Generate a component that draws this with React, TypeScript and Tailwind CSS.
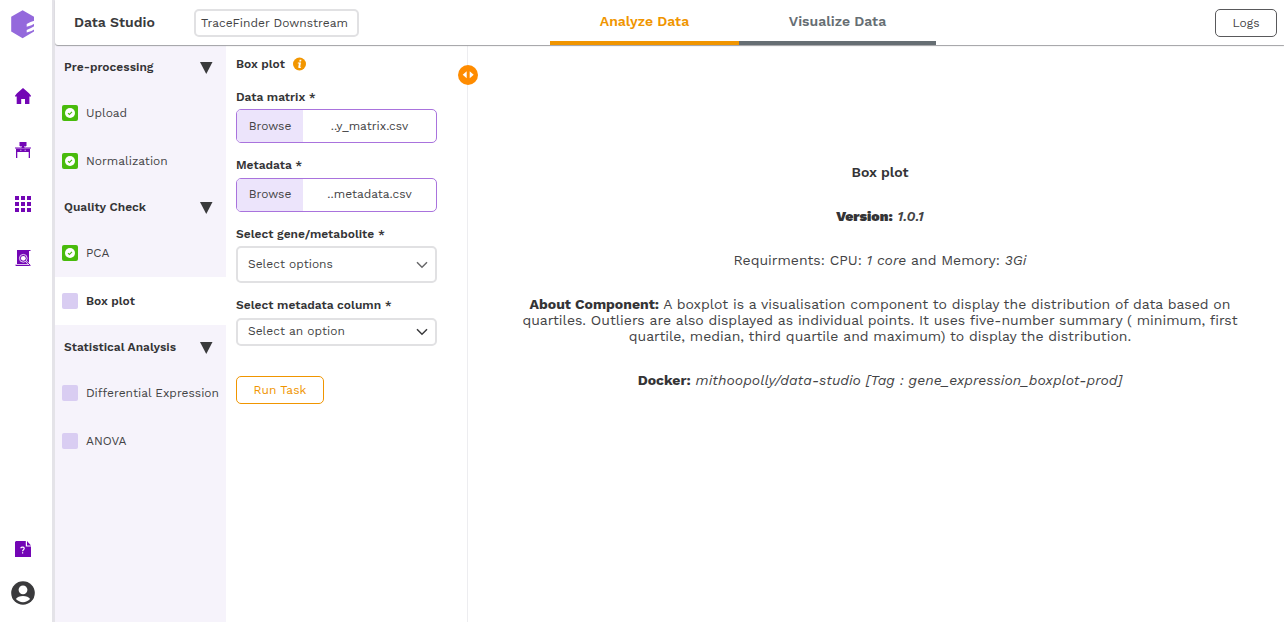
import React, { useState } from "react";

type Step = { name: string; done?: boolean; active?: boolean };
type Group = { title: string; steps: Step[] };

const groups: Group[] = [
  {
    title: "Pre-processing",
    steps: [
      { name: "Upload", done: true },
      { name: "Normalization", done: true },
    ],
  },
  {
    title: "Quality Check",
    steps: [
      { name: "PCA", done: true },
      { name: "Box plot", active: true },
    ],
  },
  {
    title: "Statistical Analysis",
    steps: [{ name: "Differential Expression" }, { name: "ANOVA" }],
  },
];

function Logo() {
  return (
    <svg width="24" height="29" viewBox="0 0 24 29" className="shrink-0">
      <path d="M11.600 .3 23 6.800V21.600L11.600 28.300 .2 21.600V6.800Z" fill="#9469dc" />
      <path d="M15.700 14 19.500 12 24 10.400V13.200L20.500 15.200 15.700 16.700ZM15.700 20 20 17.900 24 15.700V19L20.500 21 15.700 22.600Z" fill="#fff" />
    </svg>
  );
}

function HomeIcon() {
  return (
    <svg width="16" height="16" viewBox="0 0 16 16" fill="#7306b5">
      <path d="M8 0 10.9 2.5 14 5.3 16 7.8V8.6H14.4V16H10V11H6.2V16H1.7V8.6H0V7.8L2 5.3Z" />
    </svg>
  );
}

function DeskIcon() {
  return (
    <svg width="16" height="16" viewBox="0 0 16 16" fill="#7306b5">
      <path d="M4.500 0h7v4h-7zM6.500 4h3v1.500h-3zM0 5.400h16v1.200H0zM1 6.600h14V10H1zM1 10h1.300v6H1zM13.700 10H15v6h-1.300z" />
      <path d="M5 4h1.500v1.200H5zM9.500 4H11v1.200H9.500zM1 6.500h14v.6H1zM5 7.800h1.500v.9H5zM9.500 7.800H11v.9H9.500z" fill="#c79ce4" />
    </svg>
  );
}

function GridIcon() {
  return (
    <svg width="16" height="16" viewBox="0 0 16 16" fill="#7306b5">
      <path d="M0 0h4v4H0zM6 0h4v4H6zM12 0h4v4h-4zM0 6h4v4H0zM6 6h4v4H6zM12 6h4v4h-4zM0 12h4v4H0zM6 12h4v4H6zM12 12h4v4h-4z" />
    </svg>
  );
}

function ScrollIcon() {
  return (
    <svg width="16" height="16" viewBox="0 0 16 16">
      <path d="M2 0h13.500v1H14v13H2zM0 14.800h14l1.500 1.200H1z" fill="#7306b5" />
      <circle cx="8.300" cy="8.300" r="3.900" fill="none" stroke="#e3cdf1" strokeWidth="1" />
      <circle cx="8.300" cy="8.300" r="2.400" fill="#fff" />
      <path d="m11.400 11.600 3 2.700" stroke="#fff" strokeWidth="1.800" />
      <path d="m11.500 11.700 4 3.700" stroke="#7306b5" strokeWidth="1" />
    </svg>
  );
}

function HelpIcon() {
  return (
    <svg width="16" height="16" viewBox="0 0 16 16">
      <path d="M1 0H10.800V5.600H16V16H0V1Z" fill="#7306b5" />
      <path d="M12 0 16 4.400H12Z" fill="#7306b5" />
      <path
        d="M5.900 7.200C5.900 5.700 9.200 5.500 9.200 7.400 9.200 8.700 7.600 8.700 7.600 10.300M7.600 11.300V12.600"
        fill="none"
        stroke="#fff"
        strokeWidth="1.200"
      />
    </svg>
  );
}

function AvatarIcon() {
  return (
    <svg width="24" height="24" viewBox="0 0 24 24">
      <circle cx="12" cy="12" r="11.800" fill="#3a3a3c" />
      <circle cx="12" cy="8.800" r="4.400" fill="#fff" />
      <path d="M4.900 18.100C7 14.100 17 14.100 19.100 18.100 15.500 22.200 8.500 22.200 4.900 18.100Z" fill="#fff" />
    </svg>
  );
}

function StatusBox({ done }: { done?: boolean }) {
  if (!done) return <span className="size-4 shrink-0 rounded-[2px] bg-[#d9cdf2]" />;
  return (
    <svg width="16" height="16" viewBox="0 0 16 16" className="shrink-0">
      <rect width="16" height="16" rx="2" fill="#49bb0c" />
      <circle cx="8" cy="8" r="5" fill="#fff" />
      <path d="m6 8.100 1.400 1.300 2.600-2.600" fill="none" stroke="#49bb0c" strokeWidth="1.100" />
    </svg>
  );
}

function Chevron({ className }: { className: string }) {
  return (
    <svg width="12" height="8" viewBox="0 0 12 8" fill="none" className={className}>
      <path d="M1 1.300 6 6.200 11 1.300" stroke="currentColor" strokeWidth="1.500" />
    </svg>
  );
}

function FilePicker({ file, textClass = "" }: { file: string; textClass?: string }) {
  return (
    <div className="flex h-[34px] w-[201px] overflow-hidden rounded-[5px] border border-[#a973dd] text-xs">
      <button className={`w-[66px] bg-[#ece4fb] ${textClass}`}>Browse</button>
      <span className={`flex flex-1 items-center justify-center ${textClass}`}>{file}</span>
    </div>
  );
}

function Label({ children, className }: { children: React.ReactNode; className: string }) {
  return <div className={`flex h-4 items-center text-xs font-semibold whitespace-nowrap text-[#343436] ${className}`}>{children}</div>;
}

export default function App() {
  const [tab, setTab] = useState("analyze");
  return (
    <div className="flex h-[622px] w-full overflow-hidden bg-white font-['Work_Sans',Inter,sans-serif] text-[#434345]">
      <aside className="flex w-[55px] shrink-0 flex-col items-center border-r-[3px] border-[#e4e3e8] pt-[10px] pr-[6px] pb-[17px]">
        <Logo />
        <nav className="mt-[49px] flex flex-col gap-[38px]">
          <HomeIcon />
          <DeskIcon />
          <GridIcon />
          <ScrollIcon />
        </nav>
        <div className="mt-auto flex flex-col items-center gap-6">
          <HelpIcon />
          <AvatarIcon />
        </div>
      </aside>

      <div className="flex min-w-0 flex-1 flex-col">
        <header className="z-10 flex h-[45px] shrink-0 rounded-bl-[3px] bg-white shadow-[0_1px_1px_#a0a0a4]">
          <h1 className="w-[139px] pt-[12px] pl-[19px] text-sm font-semibold text-[#3a3a3c]">Data Studio</h1>
          <div className="mt-[9px] flex h-7 w-[165px] items-center rounded-[5px] border-2 border-[#e1e1e3] pl-[5px] text-xs whitespace-nowrap">
            TraceFinder Downstream
          </div>
          <div className="ml-[191px] flex text-sm font-semibold">
            <button onClick={() => setTab("analyze")} aria-pressed={tab === "analyze"} className="w-[189px] border-b-4 border-[#f09500] text-[#f09500]">
              Analyze Data
            </button>
            <button onClick={() => setTab("visualize")} aria-pressed={tab === "visualize"} className="w-[197px] border-b-4 border-[#666e73] text-[#666e73]">
              Visualize Data
            </button>
          </div>
          <button className="mt-[9px] mr-[7px] ml-auto h-7 w-[62px] rounded-[5px] border border-[#59595b] text-xs">Logs</button>
        </header>

        <div className="flex min-h-0 flex-1">
          <nav className="w-[171px] shrink-0 bg-[#f6f3fb] text-xs">
            {groups.map((g) => (
              <section key={g.title}>
                <h2 className="flex h-11 items-center justify-between pr-[13px] pl-[9px] text-xs font-semibold text-[#343436]">
                  {g.title}
                  <svg width="13" height="12" viewBox="0 0 13 12" fill="#3a3a3c" className="mt-px">
                    <path d="M0 0h12.500L6.250 12z" />
                  </svg>
                </h2>
                {g.steps.map((s) => (
                  <div
                    key={s.name}
                    className={`flex h-12 items-center gap-2 pl-[7px] whitespace-nowrap ${s.active ? "bg-white font-semibold text-[#343436]" : ""}`}
                  >
                    <StatusBox done={s.done} />
                    {s.name}
                  </div>
                ))}
              </section>
            ))}
          </nav>

          <section className="relative w-[242px] shrink-0 border-r border-[#ededf0] pt-[11px] pl-[10px]">
            <Label className="gap-2">
              Box plot
              <svg width="13" height="14" viewBox="0 0 13 14">
                <circle cx="6.500" cy="7" r="6.500" fill="#f29600" />
                <path d="M6.600 2.800h1.800L8.100 4.500H6.300zM4.900 5.500H8L7.200 9.900l1-.2L8 10.400C7 11.300 5.100 11.300 5.300 10L5.900 6.400H4.700z" fill="#fff" />
              </svg>
            </Label>
            <Label className="mt-[17px] mb-[4px]">Data matrix *</Label>
            <FilePicker file="..y_matrix.csv" />
            <Label className="mt-[14px] mb-[5px]">Metadata *</Label>
            <FilePicker file="..metadata.csv" textClass="pb-[2px]" />
            <Label className="mt-[14px] mb-[4px]">Select gene/metabolite *</Label>
            <button className="flex h-[37px] w-[201px] items-center justify-between rounded-[5px] border-2 border-[#e1e1e3] pr-[7px] pb-[2px] pl-[10px] text-xs">
              Select options
              <Chevron className="mt-[2px] text-[#68686a]" />
            </button>
            <Label className="mt-[14px] mb-[5px]">Select metadata column *</Label>
            <button className="flex h-7 w-[201px] items-center justify-between rounded-[5px] border-2 border-[#e1e1e3] pr-[7px] pb-[2px] pl-[10px] text-xs">
              Select an option
              <Chevron className="mt-[2px] text-[#3a3a3c]" />
            </button>
            <button className="mt-[30px] h-7 w-[88px] rounded-[5px] border border-[#f09500] text-xs tracking-[0.05px] text-[#f09500]">Run Task</button>
            <button className="absolute top-[20px] -right-[11px] size-5" aria-label="Resize panel">
              <svg width="20" height="20" viewBox="0 0 20 20">
                <circle cx="10" cy="10" r="10" fill="#ff8c00" />
                <path d="M8.700 6.300v7L4.700 9.800zM11.700 6.300v7l4-3.500z" fill="#fff" />
              </svg>
            </button>
          </section>

          <main className="flex flex-1 flex-col items-center gap-7 pt-[119px] pl-[8px] text-center text-sm/4 whitespace-nowrap">
            <h2 className="font-semibold text-[#343436]">Box plot</h2>
            <p>
              <b className="font-black text-[#343436]">Version:</b> <i className="font-semibold tracking-[0.1px]">1.0.1</i>
            </p>
            <p>
              Requirments: CPU: <i className="tracking-[0.1px]">1 core</i> and Memory: <i className="tracking-[0.1px]">3Gi</i>
            </p>
            <p>
              <span className="block">
                <b className="text-[#343436]">About Component:</b> A boxplot is a visualisation component to display the distribution of data based on
              </span>
              <span className="block">
                quartiles. Outliers are also displayed as individual points. It uses five-number summary ( minimum, first
              </span>
              <span className="block">quartile, median, third quartile and maximum) to display the distribution.</span>
            </p>
            <p>
              <b className="text-[#343436]">Docker:</b> <i className="tracking-[0.04px]">mithoopolly/data-studio [Tag : gene_expression_boxplot-prod]</i>
            </p>
          </main>
        </div>
      </div>
    </div>
  );
}
